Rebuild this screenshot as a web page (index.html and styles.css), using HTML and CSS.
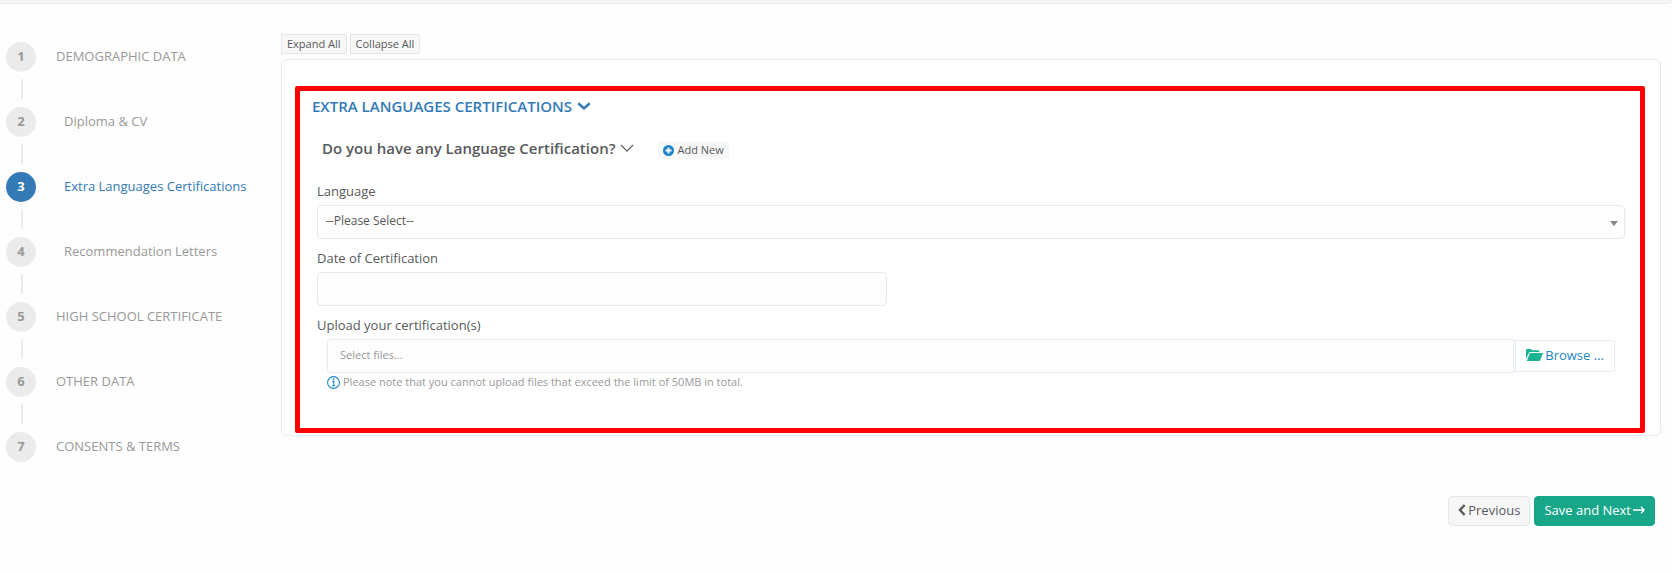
FILE: index.html
```html
<!DOCTYPE html>
<html lang="en">
<head>
<meta charset="utf-8">
<title>Extra Languages Certifications</title>
<link rel="stylesheet" href="styles.css">
</head>
<body>
<div class="topbar"></div>
<div class="layout">
  <nav class="steps" aria-label="Application steps">
    <ol class="step-list">
      <li class="step"><a href="#"><span class="step-number">1</span><span class="step-label">DEMOGRAPHIC DATA</span></a></li>
      <li class="step step-sub"><a href="#"><span class="step-number">2</span><span class="step-label">Diploma &amp; CV</span></a></li>
      <li class="step step-sub step-active"><a href="#" aria-current="step"><span class="step-number">3</span><span class="step-label">Extra Languages Certifications</span></a></li>
      <li class="step step-sub"><a href="#"><span class="step-number">4</span><span class="step-label">Recommendation Letters</span></a></li>
      <li class="step"><a href="#"><span class="step-number">5</span><span class="step-label">HIGH SCHOOL CERTIFICATE</span></a></li>
      <li class="step"><a href="#"><span class="step-number">6</span><span class="step-label">OTHER DATA</span></a></li>
      <li class="step"><a href="#"><span class="step-number">7</span><span class="step-label">CONSENTS &amp; TERMS</span></a></li>
    </ol>
  </nav>
  <main class="content">
    <div class="toolbar">
      <button type="button" class="btn-small">Expand All</button>
      <button type="button" class="btn-small">Collapse All</button>
    </div>
    <form>
      <div class="panel">
        <section class="section">
          <h1 class="section-title">EXTRA LANGUAGES CERTIFICATIONS
            <svg width="14" height="14" viewBox="0 0 14 14"><path d="M1.2 4.2l5.8 5.2 5.8-5.2" fill="none" stroke="currentColor" stroke-width="2.5"/></svg>
          </h1>
          <div class="question">
            <h2 class="question-title">Do you have any Language Certification?
              <svg width="14" height="14" viewBox="0 0 14 14"><path d="M1 4l6 6.2L13 4" fill="none" stroke="currentColor" stroke-width="1.1"/></svg>
            </h2>
            <button type="button" class="btn-add">
              <svg width="11" height="11" viewBox="0 0 11 11"><circle cx="5.5" cy="5.5" r="5.5" fill="#1c84c6"/><path d="M5.5 2.5v6M2.5 5.5h6" stroke="#fff" stroke-width="1.8"/></svg>
              Add New
            </button>
          </div>
          <div class="fields">
            <div class="field">
              <label for="language">Language</label>
              <div class="select-wrap">
                <select id="language" class="control"><option>--Please Select--</option></select>
                <svg class="select-arrow" width="8" height="5" viewBox="0 0 8 5"><path d="M0 0h8L4 5z" fill="#888"/></svg>
              </div>
            </div>
            <div class="field">
              <label for="cert-date">Date of Certification</label>
              <input id="cert-date" type="text" class="control control-date">
            </div>
            <div class="field">
              <label for="files">Upload your certification(s)</label>
              <div class="upload">
                <div class="upload-row">
                  <input id="files" type="text" class="control control-file" placeholder="Select files..." readonly>
                  <button type="button" class="btn-browse">
                    <svg width="17" height="12" viewBox="0 0 17 12"><path d="M0 10V1.2Q0 0 1.2 0H5l1.2 1.2h6.2q1 0 1 1V3H4.2q-1 0-1.4 1zM4.8 4H17l-2.7 7q-.4 1-1.4 1H.8L3.6 4.8Q4 4 4.8 4z" fill="#1ab394"/></svg>
                    Browse ...
                  </button>
                </div>
                <p class="note">
                  <svg width="13" height="13" viewBox="0 0 13 13"><circle cx="6.5" cy="6.5" r="5.9" fill="none" stroke="#1c84c6" stroke-width="1.1"/><path d="M5.2 5.5h1.6v4M5 9.7h3.2" fill="none" stroke="#1c84c6" stroke-width="1.1"/><circle cx="6.5" cy="3.5" r=".9" fill="#1c84c6"/></svg>
                  Please note that you cannot upload files that exceed the limit of 50MB in total.
                </p>
              </div>
            </div>
          </div>
        </section>
      </div>
      <div class="actions">
        <button type="button" class="btn btn-prev">
          <svg width="8" height="12" viewBox="0 0 8 12"><path d="M6.6 1L2 6l4.6 5" fill="none" stroke="currentColor" stroke-width="2.4"/></svg>
          Previous
        </button>
        <button type="submit" class="btn btn-next">
          Save and Next
          <svg width="12" height="10" viewBox="0 0 12 10"><path d="M0 5h11M8 1.8L11.2 5 8 8.2" fill="none" stroke="currentColor" stroke-width="1.3"/></svg>
        </button>
      </div>
    </form>
  </main>
</div>
</body>
</html>
```
FILE: styles.css
```css
* {
  box-sizing: border-box;
}

body {
  margin: 0;
  background: #fefefe;
  color: #58595b;
  font: 13px/18px "Open Sans", sans-serif;
}

button,
input,
select {
  margin: 0;
  color: inherit;
  font: inherit;
}

button {
  cursor: pointer;
}

svg {
  flex: none;
}

.topbar {
  height: 4px;
  background: #f5f5f5;
  border-bottom: 1px solid #ececec;
  border-bottom-right-radius: 4px;
}

.layout {
  display: flex;
  padding: 30px 11px 47px 6px;
}

.steps {
  flex: none;
  width: 275px;
  padding-top: 8px;
}

.step-list {
  display: flex;
  flex-direction: column;
  gap: 7px;
  margin: 0;
  padding: 0;
  list-style: none;
}

.step a {
  display: flex;
  align-items: center;
  gap: 20px;
  color: #999;
  text-decoration: none;
}

.step-sub a {
  gap: 28px;
}

.step-label {
  padding-bottom: 2px;
}

.step:not(:last-child)::after {
  content: "";
  display: block;
  width: 2px;
  height: 20px;
  margin: 7px 0 1px 15px;
  background: #ebebeb;
}

.step-number {
  width: 30px;
  height: 30px;
  border-radius: 50%;
  background: #ebebeb;
  font-weight: 700;
  line-height: 29px;
  text-align: center;
}

.step-active a {
  color: #337ab7;
}

.step-active .step-number {
  background: #337ab7;
  color: #fff;
}

.content {
  flex: 1;
  min-width: 0;
}

.toolbar {
  display: flex;
  gap: 3px;
  margin-bottom: 5px;
}

.btn-small {
  height: 20px;
  padding: 0 5px;
  border: 1px solid #e7e7e7;
  background: #f7f7f7;
  font-size: 11px;
  line-height: 18px;
}

.panel {
  padding: 26px 15px 2px 13px;
  border: 1px solid #e4eaf2;
  border-radius: 6px;
  background: #fff;
}

.section {
  padding: 5px 15px 37px 12px;
  border: 5px solid #f00;
  border-radius: 2px;
}

.section-title,
.question-title {
  display: flex;
  align-items: center;
  gap: 5px;
  margin: 0;
  font-size: 15px;
  font-weight: 600;
  line-height: 20px;
}

.section-title {
  color: #337ab7;
}

.question {
  display: flex;
  align-items: center;
  gap: 24px;
  margin: 21px 0 0 10px;
}

.btn-add {
  display: flex;
  align-items: center;
  gap: 3px;
  height: 18px;
  margin-top: 4px;
  padding: 0 5px;
  border: 0;
  background: #f7f7f7;
  font-size: 11px;
}

.fields {
  display: flex;
  flex-direction: column;
  gap: 10px;
  margin: 23px 0 0 5px;
}

.field label {
  display: block;
  margin-bottom: 5px;
}

.control {
  display: block;
  width: 100%;
  height: 34px;
  padding: 0 8px;
  border: 1px solid #e4eaf2;
  border-radius: 4px;
  background: #fdfdfd;
  appearance: none;
}

.select-wrap {
  position: relative;
}

.select-wrap .control {
  padding-bottom: 3px;
  font-size: 12px;
}

.select-arrow {
  position: absolute;
  top: 16px;
  right: 7px;
  pointer-events: none;
}

.control-date {
  width: 43.6%;
}

.upload {
  margin: 0 10px;
}

.upload-row {
  display: flex;
  align-items: center;
  gap: 1px;
}

.control-file {
  flex: 1;
  width: auto;
  min-width: 0;
  padding: 0 12px 3px;
  border-radius: 4px 0 0 4px;
  font-size: 11px;
}

.control-file::placeholder {
  color: #999;
}

.btn-browse {
  display: flex;
  align-items: center;
  gap: 2px;
  height: 32px;
  padding: 0 10px 2px;
  border: 1px solid #e4eaf2;
  border-radius: 0 4px 4px 0;
  background: #fff;
  color: #1c84c6;
}

.note {
  display: flex;
  align-items: center;
  gap: 3px;
  margin: 0;
  color: #999;
  font-size: 11px;
}

.actions {
  display: flex;
  justify-content: flex-end;
  gap: 4px;
  margin: 60px 6px 0 0;
}

.btn {
  display: flex;
  align-items: center;
  gap: 2px;
  height: 30px;
  padding: 0 9px 2px;
  border: 1px solid #e7e7e7;
  border-radius: 4px;
  background: #f7f7f7;
}

.btn-next {
  border-color: #18a689;
  background: #18a689;
  color: #fff;
}
```
